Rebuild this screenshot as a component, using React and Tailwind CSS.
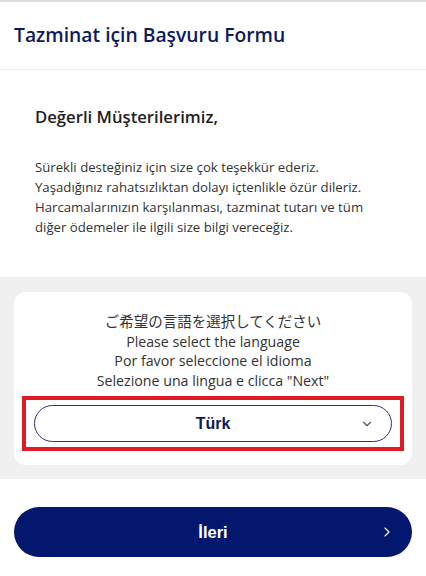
import { ChevronDown, ChevronRight } from "lucide-react";

const App = () => {
  return (
    <div className="w-[426px] h-[576px] bg-white overflow-hidden font-['Open_Sans','Noto_Sans_CJK_JP',sans-serif]">
      {/* Header */}
      <header className="h-[70px] border-t-2 border-b border-t-[#dcdcdc] border-b-[#ececec] flex items-center px-[14px]">
        <h1 className="text-[19.3px] font-semibold text-[#0f1a5a]">Tazminat için Başvuru Formu</h1>
      </header>

      {/* Intro */}
      <section className="px-[35px] pt-[35px] h-[207px]">
        <h2 className="text-[16.7px] font-semibold text-[#222] leading-[24px]">Değerli Müşterilerimiz,</h2>
        <p className="mt-[28px] text-[13.2px] leading-[20px] text-[#333]">
          Sürekli desteğiniz için size çok teşekkür ederiz.
          <br />
          Yaşadığınız rahatsızlıktan dolayı içtenlikle özür dileriz.
          <br />
          Harcamalarınızın karşılanması, tazminat tutarı ve tüm
          <br />
          diğer ödemeler ile ilgili size bilgi vereceğiz.
        </p>
      </section>

      {/* Language picker */}
      <section className="bg-[#f0f0f0] px-[14px] pt-[15px] pb-[14px]">
        <div className="bg-white rounded-[12px] pt-[20px] pb-[14px] px-[8px]">
          <div className="text-center text-[14.2px] leading-[19.5px] text-[#333]">
            <p className="text-[14.5px]">ご希望の言語を選択してください</p>
            <p>Please select the language</p>
            <p>Por favor seleccione el idioma</p>
            <p>Selezione una lingua e clicca "Next"</p>
          </div>
          <div className="mt-[6px] border-[4px] border-[#e01b24] px-[8px] py-[5px]">
            <button className="relative w-full h-[37px] rounded-full border border-[#2c3470] bg-white flex items-center justify-center">
              <span className="text-[16px] font-bold text-[#0f1a5a] font-['Liberation_Sans',sans-serif]">Türk</span>
              <ChevronDown className="absolute right-[17px] w-[14px] h-[14px] text-[#555]" strokeWidth={2} />
            </button>
          </div>
        </div>
      </section>

      {/* Next button */}
      <div className="px-[14px] pt-[28px]">
        <button className="relative w-full h-[50px] rounded-full bg-[#03176e] flex items-center justify-center">
          <span className="text-[16.5px] font-bold text-white font-['Liberation_Sans',sans-serif]">İleri</span>
          <ChevronRight className="absolute right-[17px] w-[16px] h-[16px] text-white" strokeWidth={1.75} />
        </button>
      </div>
    </div>
  );
};

export default App;
